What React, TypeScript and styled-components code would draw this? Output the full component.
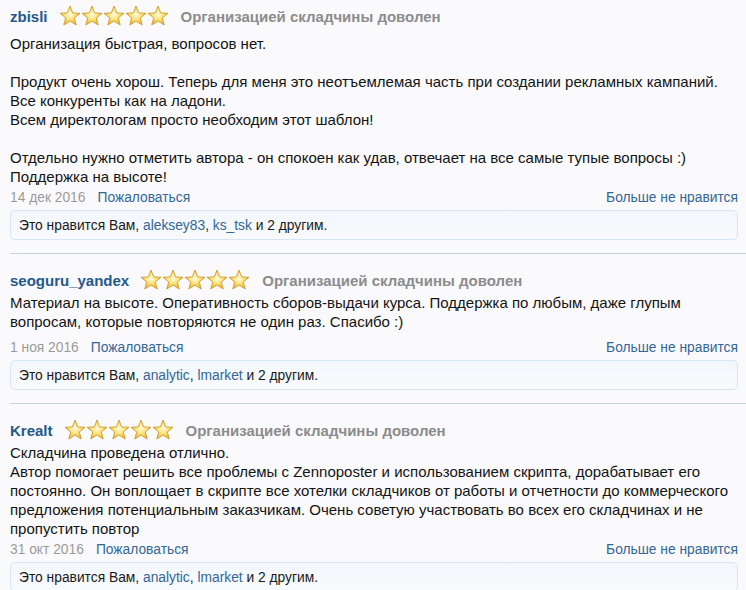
import React, { FunctionComponent } from 'react'
import styled, { createGlobalStyle } from 'styled-components'

const GlobalStyle = createGlobalStyle`
html, body {
    margin: 0;
    padding: 0;
    background: #fafafc;
}
body {
    font-family: "Liberation Sans", Arial, sans-serif;
    color: #1a1a1a;
}
`

const Page = styled.div`
display: flex;
flex-flow: column nowrap;
width: 746px;
`

const Post = styled.div`
display: flex;
flex-flow: column nowrap;
margin-left: 10px;
padding-top: 13px;
padding-bottom: 13px;
border-bottom: 1px solid #c5d1de;

&:first-child {
    padding-top: 3px;
}
&:last-child {
    border-bottom: none;
}
`

const Header = styled.div`
display: flex;
align-items: center;
height: 26px;
`

const Author = styled.span`
font-size: 15px;
font-weight: bold;
color: #24598d;
margin-right: 11px;
`

const Stars = styled.span`
display: flex;
margin-right: 12px;
`

const Title = styled.span`
font-size: 15px;
font-weight: bold;
color: #8c8c8c;
`

const Body = styled.div<{ $top?: number; $tail?: number }>`
width: 728px;
margin-top: ${p => p.$top || 0}px;
margin-bottom: ${p => p.$tail || 0}px;
font-size: 15px;
line-height: 19px;
color: #141414;
`

const Meta = styled.div`
display: flex;
width: 728px;
margin-top: 2px;
font-size: 13.8px;
line-height: 19px;
`

const Date = styled.span`
color: #9a9a9a;
margin-right: 12px;
`

const Link = styled.a`
color: #336699;
text-decoration: none;
cursor: pointer;
`

const Unlike = styled(Link)`
margin-left: auto;
`

const LikeBox = styled.div`
box-sizing: border-box;
width: 728px;
height: 30px;
margin-top: 3px;
padding: 0 8px;
display: flex;
align-items: center;
font-size: 13.8px;
color: #1a1a1a;
border: 1px solid #d6e6f5;
border-radius: 5px;
background: linear-gradient(to bottom, #f3f7fc, #f8fafd);
`

const Star = () => (
    <svg width="22" height="22" viewBox="0 0 22 22">
        <defs>
            <radialGradient id="starFill" cx="50%" cy="45%" r="60%">
                <stop offset="0%" stopColor="#fffbe0" />
                <stop offset="45%" stopColor="#fbe37a" />
                <stop offset="100%" stopColor="#e7a825" />
            </radialGradient>
        </defs>
        <polygon
            points="11,1 13.6,7.9 21,8.3 15.3,12.9 17.2,20 11,16 4.8,20 6.7,12.9 1,8.3 8.4,7.9"
            fill="url(#starFill)"
            stroke="#d19a2a"
            strokeWidth="0.9"
            strokeLinejoin="round"
        />
    </svg>
)

interface PostInterface {
    author: string;
    date: string;
    body: React.ReactNode;
    likers: string[];
    top?: number;
    tail?: number;
}

const PostBlock: FunctionComponent<PostInterface> = (props: PostInterface) => (
    <Post>
        <Header>
            <Author>{props.author}</Author>
            <Stars>
                {[0, 1, 2, 3, 4].map(i => <Star key={i} />)}
            </Stars>
            <Title>Организацией складчины доволен</Title>
        </Header>
        <Body $top={props.top} $tail={props.tail}>{props.body}</Body>
        <Meta>
            <Date>{props.date}</Date>
            <Link>Пожаловаться</Link>
            <Unlike>Больше не нравится</Unlike>
        </Meta>
        <LikeBox>
            <span>
                Это нравится Вам, <Link>{props.likers[0]}</Link>, <Link>{props.likers[1]}</Link> и 2 другим.
            </span>
        </LikeBox>
    </Post>
)

const posts: PostInterface[] = [
    {
        author: 'zbisli',
        date: '14 дек 2016',
        likers: ['aleksey83', 'ks_tsk'],
        top: 5,
        body: <>
            Организация быстрая, вопросов нет.<br /><br />
            Продукт очень хорош. Теперь для меня это неотъемлемая часть при создании рекламных кампаний.<br />
            Все конкуренты как на ладони.<br />
            Всем директологам просто необходим этот шаблон!<br /><br />
            Отдельно нужно отметить автора - он спокоен как удав, отвечает на все самые тупые вопросы :)<br />
            Поддержка на высоте!
        </>
    },
    {
        author: 'seoguru_yandex',
        date: '1 ноя 2016',
        likers: ['analytic', 'lmarket'],
        tail: 5,
        body: <>Материал на высоте. Оперативность сборов-выдачи курса. Поддержка по любым, даже глупым вопросам, которые повторяются не один раз. Спасибо :)</>
    },
    {
        author: 'Krealt',
        date: '31 окт 2016',
        likers: ['analytic', 'lmarket'],
        body: <>
            Складчина проведена отлично.<br />
            Автор помогает решить все проблемы с Zennoposter и использованием скрипта, дорабатывает его постоянно. Он воплощает в скрипте все хотелки складчиков от работы и отчетности до коммерческого предложения потенциальным заказчикам. Очень советую участвовать во всех его складчинах и не пропустить повтор
        </>
    }
]

const App = () => (
    <>
        <GlobalStyle />
        <Page>
            {posts.map(p => <PostBlock key={p.author} {...p} />)}
        </Page>
    </>
)

export default App
